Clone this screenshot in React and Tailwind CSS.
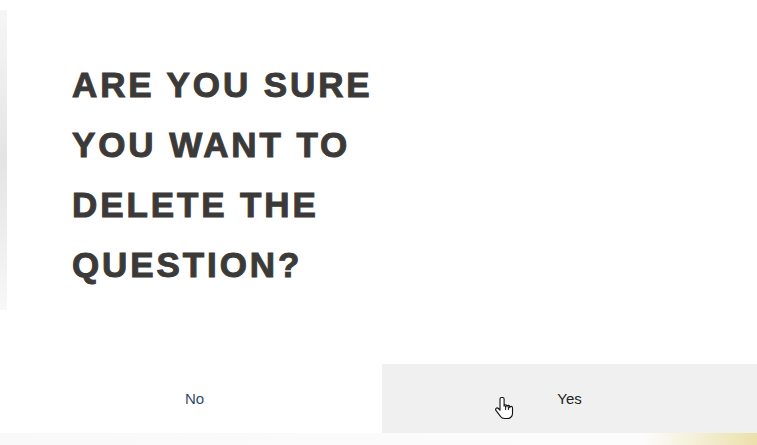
import React from 'react';

const HandCursor = () => (
  <svg width="20" height="26" viewBox="0 0 20 26" className="absolute left-[495px] top-[396px]">
    <path
      d="M6.5 1.5c-.9 0-1.5.7-1.5 1.5v11.2l-1.6-1.7c-.7-.7-1.7-.7-2.3-.1-.6.6-.6 1.5 0 2.2l4.2 5.6c1 1.4 2.5 2.3 4.3 2.3h2.8c2.9 0 5.1-2.3 5.1-5.1v-5.6c0-.8-.6-1.4-1.4-1.4-.8 0-1.4.6-1.4 1.4v-1c0-.8-.6-1.4-1.4-1.4-.8 0-1.4.6-1.4 1.4v-.6c0-.8-.6-1.4-1.4-1.4-.8 0-1.4.6-1.4 1.4V3c0-.8-.6-1.5-1.5-1.5z"
      fill="#fff"
      stroke="#111"
      strokeWidth="1.1"
      strokeLinejoin="round"
    />
    <path d="M10.6 9.5v4.5M13.4 10.3v3.7" stroke="#111" strokeWidth="1" />
  </svg>
);

export default function App() {
  return (
    <div className="relative w-[757px] h-[445px] overflow-hidden bg-white font-['Liberation_Sans',Arial,sans-serif]">
      <div className="flex h-[433px]">
        <div className="w-[7px] pt-[10px]">
          <div className="h-[300px] bg-gradient-to-b from-[#f6f6f6] via-[#e4e4e4] to-[#f8f8f8]" />
        </div>
        <div className="flex-1 flex flex-col bg-white">
          <h1 className="pl-[65px] pt-[55px] max-w-[390px] text-[35px] leading-[60px] font-bold uppercase tracking-[2.9px] text-[#3c3a38] [-webkit-text-stroke:1px_#3c3a38]">
            Are you sure you want to delete the question?
          </h1>
          <div className="mt-auto flex h-[69px]">
            <button className="flex-1 flex items-center justify-center pt-[2px] text-[15px] text-[#2f4b6c]">
              No
            </button>
            <button className="flex-1 flex items-center justify-center pt-[2px] bg-[#f0f0f0] text-[15px] text-[#222]">
              Yes
            </button>
          </div>
        </div>
      </div>
      <div className="h-[12px] bg-gradient-to-r from-[#f9f9f9] via-[#fcfcfc] via-85% to-[#ebe0aa]" />
      <HandCursor />
    </div>
  );
}
